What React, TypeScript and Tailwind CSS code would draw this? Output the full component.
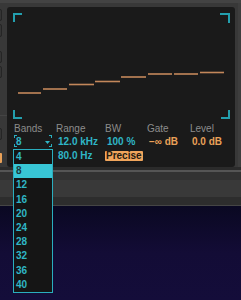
import React from "react";

const steps = [
  { x1: 11, x2: 34, y: 86 },
  { x1: 36, x2: 60, y: 82 },
  { x1: 62, x2: 87, y: 77.5 },
  { x1: 88, x2: 113, y: 74.5 },
  { x1: 114, x2: 139, y: 70 },
  { x1: 141, x2: 165, y: 67 },
  { x1: 167, x2: 191, y: 67 },
  { x1: 193, x2: 217, y: 65.5 },
];

const options = ["4", "8", "12", "16", "20", "24", "28", "32", "36", "40"];

function Chart() {
  const c = "#239fae";
  return (
    <svg width="228" height="116" viewBox="0 0 228 116" className="block shrink-0">
      <path d="M7 15 V7 H15" stroke={c} strokeWidth="2" fill="none" />
      <path d="M213 7 H222 V16" stroke={c} strokeWidth="2" fill="none" />
      <path d="M7 103 V111 H15" stroke={c} strokeWidth="2" fill="none" />
      <path d="M214 111 H222 V103" stroke={c} strokeWidth="2" fill="none" />
      {steps.map((s, i) => (
        <line key={i} x1={s.x1} x2={s.x2} y1={s.y} y2={s.y} stroke="#c3875a" strokeWidth="1.6" />
      ))}
    </svg>
  );
}

function Corner({ cls }: { cls: string }) {
  return <div className={`absolute w-[3px] h-[3px] border-[#2aaebe] ${cls}`} />;
}

export default function App() {
  return (
    <div className="relative w-[241px] h-[300px] overflow-hidden bg-[#383838] font-['Liberation_Sans',Arial,sans-serif] text-[10px] leading-[12px]">
      <div className="h-[3px] bg-[#434343]" />
      <div className="flex h-[164px]">
        <div className="w-[7px] flex flex-col">
          <div className="w-[6px] -ml-[4px] h-[12px] mt-[6px] rounded-[2px] border border-[#252525] bg-[#343434]" />
          <div className="w-[6px] -ml-[4px] h-[13px] mt-[3px] rounded-[2px] border border-[#252525] bg-[#343434]" />
          <div className="w-[6px] -ml-[4px] h-[12px] mt-[14px] rounded-[2px] border border-[#252525] bg-[#343434]" />
          <div className="w-[6px] -ml-[4px] h-[12px] mt-[3px] rounded-[2px] border border-[#252525] bg-[#343434]" />
          <div className="w-[7px] h-[1px] mt-[37px] bg-[#444]" />
          <div className="w-[6px] -ml-[4px] h-[12px] mt-[12px] rounded-[2px] border border-[#252525] bg-[#343434]" />
          <div className="w-[6px] -ml-[4px] h-[10px] mt-[13px] rounded-[1px] bg-[#e9a158]" />
        </div>
        <div className="mt-[4px] w-[228px] h-[160px] rounded-[3px] bg-[#1a1a1a] flex flex-col">
          <Chart />
          <div className="grid grid-cols-[42px_49px_42px_43px_1fr] pl-[7px] text-[#8c8c8c]">
            <div>Bands</div>
            <div>Range</div>
            <div>BW</div>
            <div>Gate</div>
            <div>Level</div>
          </div>
          <div className="grid grid-cols-[42px_49px_42px_43px_1fr] pl-[7px] mt-[1px] font-bold">
            <div className="relative w-[38px] h-[12px] mt-[-1px] pl-[2px] pt-[1px] text-[#2fb6c6]">
              <Corner cls="left-0 top-0 border-l border-t" />
              <Corner cls="right-0 top-0 border-r border-t" />
              <Corner cls="left-0 bottom-0 border-l border-b" />
              <Corner cls="right-0 bottom-0 border-r border-b" />
              <span>8</span>
              <svg width="5" height="3" viewBox="0 0 5 3" className="absolute left-[31px] top-[6px]">
                <path d="M0 0 H5 L2.5 3 Z" fill="#2fb6c6" />
              </svg>
            </div>
            <div className="pl-[2px] text-[#2fb6c6]">12.0 kHz</div>
            <div className="pl-[2px] text-[#2fb6c6]">100 %</div>
            <div className="pl-[2px] text-[#e9a158]">−∞ dB</div>
            <div className="pl-[2px] text-[#e9a158]">0.0 dB</div>
          </div>
          <div className="grid grid-cols-[42px_49px_42px_43px_1fr] pl-[7px] mt-[2px] font-bold">
            <div />
            <div className="pl-[2px] text-[#2fb6c6]">80.0 Hz</div>
            <div>
              <span className="inline-block mt-[1px] h-[10px] leading-[10px] px-[1px] rounded-[1px] bg-[#f0a55c] text-[#24190f]">Precise</span>
            </div>
            <div />
            <div />
          </div>
        </div>
        <div className="flex-1 flex">
          <div className="w-[3px]" />
          <div className="flex-1 bg-[#3e3e3e]" />
        </div>
      </div>
      <div className="h-[3px] bg-[#2b2b2b]" />
      <div className="h-[2px] bg-[#555]" />
      <div className="h-[8px] bg-[#323232]" />
      <div className="h-[17px] bg-[#393939]" />
      <div className="h-[8px] bg-[#2d2d2d]" />
      <div className="h-[1px] bg-[#454545]" />
      <div className="h-[94px] bg-gradient-to-b from-[#0a0822] via-[#130c36] to-[#140d3a]" />

      <div className="absolute left-[13px] top-[149px] w-[40px] border border-[#2aaebe] bg-[#151515] font-bold text-[#2fb6c6]">
        {options.map((o) => (
          <div
            key={o}
            className={
              o === "8"
                ? "h-[14.2px] leading-[14.2px] pl-[2px] bg-[#38c6d6] text-[#1a3a40]"
                : "h-[14.2px] leading-[14.2px] pl-[2px]"
            }
          >
            {o}
          </div>
        ))}
      </div>
    </div>
  );
}
